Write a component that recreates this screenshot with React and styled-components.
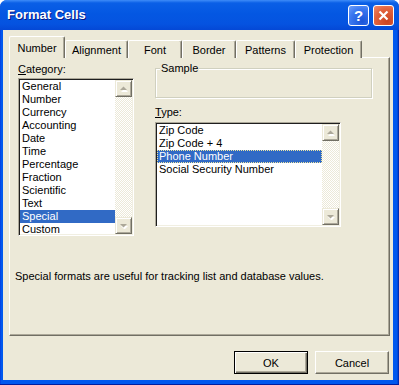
import React from "react";
import styled, { createGlobalStyle } from "styled-components";

const GlobalStyle = createGlobalStyle`
  html, body { margin: 0; padding: 0; background: #fff; }
  body {
    font-family: "Liberation Sans", Arial, sans-serif;
    font-size: 11px;
    color: #000;
  }
`;

const Frame = styled.div`
  width: 399px;
  height: 385px;
  box-sizing: border-box;
  display: flex;
  flex-direction: column;
  padding: 0 6px 5px 3px;
  border-radius: 7px 7px 0 0;
  overflow: hidden;
  background: linear-gradient(90deg, #0831d9 0, #0058ee 1px, #0058ee calc(100% - 2px), #001ea0 100%);
  box-shadow: inset 0 -1px #001ea0;
`;

const TitleBar = styled.div`
  height: 30px;
  margin: 0 -6px 0 -3px;
  padding: 0 5px 0 7px;
  display: flex;
  align-items: center;
  gap: 2px;
  background: linear-gradient(180deg, #3e8cf8 0, #0a5fe6 3px, #0457e2 14px, #0553e0 24px, #0448d6 30px);
`;

const Title = styled.div`
  flex: 1;
  color: #fff;
  font-weight: bold;
  font-size: 13px;
  text-shadow: 1px 1px #0a1883;
  padding-bottom: 1px;
`;

const CapButton = styled.div`
  width: 21px;
  height: 21px;
  box-sizing: border-box;
  border: 1px solid #fff;
  border-radius: 3px;
  display: flex;
  align-items: center;
  justify-content: center;
  color: #fff;
  font-weight: bold;
  font-size: 15px;
  background: ${(p) =>
    p.$close
      ? "radial-gradient(circle at 70% 80%, #cc4420 0, #e2623d 60%, #f08a6c 100%)"
      : "radial-gradient(circle at 70% 80%, #1a55d8 0, #3b78f0 60%, #6fa0fa 100%)"};
  margin-left: ${(p) => (p.$close ? "2px" : "0")};
`;

const Client = styled.div`
  flex: 1;
  display: flex;
  flex-direction: column;
  background: #ece9d8;
  padding: 7px 3px 0 6px;
`;

const TabStrip = styled.div`
  display: flex;
  align-items: flex-end;
  height: 21px;
  margin-bottom: -1px;
  position: relative;
  z-index: 1;
`;

const Tab = styled.div`
  width: ${(p) => p.$w}px;
  height: ${(p) => (p.$active ? 22 : 18)}px;
  box-sizing: border-box;
  display: flex;
  align-items: center;
  justify-content: center;
  padding-top: ${(p) => (p.$active ? 0 : 1)}px;
  background: #ece9d8;
  border-top: 1px solid #fff;
  border-left: 1px solid #fff;
  border-right: 1px solid #716f64;
  box-shadow: inset -1px 0 #aca899;
  border-radius: 2px 2px 0 0;
`;

const Panel = styled.div`
  height: 279px;
  box-sizing: border-box;
  border-top: 1px solid #fff;
  border-left: 1px solid #fff;
  border-right: 1px solid #716f64;
  border-bottom: 1px solid #716f64;
  box-shadow: inset -1px -1px #aca899;
  display: flex;
  flex-direction: column;
`;

const TopRow = styled.div`
  display: flex;
  gap: 21px;
  padding: 5px 0 0 8px;
`;

const Column = styled.div`
  width: ${(p) => p.$w}px;
  display: flex;
  flex-direction: column;
`;

const Label = styled.div`
  height: 13px;
  line-height: 13px;
  margin-top: ${(p) => p.$mt || 0}px;
`;

const ListBox = styled.div`
  margin-top: ${(p) => p.$mt}px;
  height: ${(p) => p.$h}px;
  box-sizing: border-box;
  display: flex;
  border-top: 1px solid #aca899;
  border-left: 1px solid #aca899;
  border-bottom: 1px solid #fff;
  border-right: 1px solid #fff;
  box-shadow: inset 1px 1px #1e1e1e, inset -1px -1px #f1efe2;
  padding: 1px;
  background: #fff;
`;

const Items = styled.div`
  flex: 1;
  overflow: hidden;
`;

const Item = styled.div`
  height: 13px;
  line-height: 13px;
  padding-left: 2px;
  white-space: nowrap;
  background: ${(p) => (p.$selected ? "#316ac5" : "transparent")};
  color: ${(p) => (p.$selected ? "#fff" : "#000")};
  outline: ${(p) => (p.$focus ? "1px dotted #f0e6a0" : "none")};
  outline-offset: -1px;
`;

const ScrollBar = styled.div`
  width: 17px;
  display: flex;
  flex-direction: column;
  justify-content: space-between;
  background: repeating-conic-gradient(#fff 0 25%, #ece9d8 0 50%) 0 0 / 2px 2px;
`;

const ScrollButton = styled.div`
  width: 17px;
  height: 17px;
  box-sizing: border-box;
  display: flex;
  align-items: center;
  justify-content: center;
  background: #ece9d8;
  border-top: 1px solid #ece9d8;
  border-left: 1px solid #ece9d8;
  border-right: 1px solid #716f64;
  border-bottom: 1px solid #716f64;
  box-shadow: inset 1px 1px #fff, inset -1px -1px #aca899;
`;

const GroupBox = styled.div`
  position: relative;
  margin-top: 5px;
  height: 30px;
  box-sizing: border-box;
  border: 1px solid #d0d0bf;
  box-shadow: inset 1px 1px #fff, 1px 1px #fff;
`;

const Legend = styled.span`
  position: absolute;
  top: -7px;
  left: 4px;
  padding: 0 1px;
  line-height: 13px;
  background: #ece9d8;
`;

const Description = styled.div`
  margin-top: 34px;
  padding-left: 5px;
  line-height: 13px;
`;

const ButtonRow = styled.div`
  display: flex;
  justify-content: flex-end;
  gap: 7px;
  margin-top: 15px;
  padding-right: 1px;
`;

const Button = styled.div`
  width: 74px;
  height: 23px;
  box-sizing: border-box;
  display: flex;
  align-items: center;
  justify-content: center;
  background: #ece9d8;
  ${(p) =>
    p.$default
      ? `border: 1px solid #000;
         box-shadow: inset 1px 1px #fff, inset -1px -1px #716f64, inset -2px -2px #aca899;`
      : `border-top: 1px solid #fff;
         border-left: 1px solid #fff;
         border-right: 1px solid #716f64;
         border-bottom: 1px solid #716f64;
         box-shadow: inset -1px -1px #aca899;`}
`;

function Arrow({ down }) {
  return (
    <svg width="9" height="6" viewBox="0 0 9 6">
      <polygon
        points={down ? "1,2 8,2 4.5,5.5" : "1,5 8,5 4.5,1.5"}
        fill="#fff"
        transform="translate(1,1)"
      />
      <polygon points={down ? "1,1 8,1 4.5,4.5" : "1,4 8,4 4.5,0.5"} fill="#aca899" />
    </svg>
  );
}

function List({ items, selected, focus, mt, h }) {
  return (
    <ListBox $mt={mt} $h={h}>
      <Items>
        {items.map((it) => (
          <Item key={it} $selected={it === selected} $focus={it === focus}>
            {it}
          </Item>
        ))}
      </Items>
      <ScrollBar>
        <ScrollButton>
          <Arrow />
        </ScrollButton>
        <ScrollButton>
          <Arrow down />
        </ScrollButton>
      </ScrollBar>
    </ListBox>
  );
}

const tabs = [
  ["Number", 56],
  ["Alignment", 63],
  ["Font", 54],
  ["Border", 54],
  ["Patterns", 59],
  ["Protection", 67],
];

const categories = [
  "General",
  "Number",
  "Currency",
  "Accounting",
  "Date",
  "Time",
  "Percentage",
  "Fraction",
  "Scientific",
  "Text",
  "Special",
  "Custom",
];

const types = ["Zip Code", "Zip Code + 4", "Phone Number", "Social Security Number"];

export default function App() {
  return (
    <>
      <GlobalStyle />
      <Frame>
        <TitleBar>
          <Title>Format Cells</Title>
          <CapButton>?</CapButton>
          <CapButton $close>
            <svg width="11" height="11" viewBox="0 0 11 11">
              <path d="M1.5 1.5 L9.5 9.5 M9.5 1.5 L1.5 9.5" stroke="#fff" strokeWidth="2.2" />
            </svg>
          </CapButton>
        </TitleBar>
        <Client>
          <TabStrip>
            {tabs.map(([t, w], i) => (
              <Tab key={t} $w={w} $active={i === 0}>
                {t}
              </Tab>
            ))}
          </TabStrip>
          <Panel>
            <TopRow>
              <Column $w={116}>
                <Label>
                  <u>C</u>ategory:
                </Label>
                <List items={categories} selected="Special" mt={2} h={158} />
              </Column>
              <Column $w={217}>
                <GroupBox>
                  <Legend>Sample</Legend>
                </GroupBox>
                <Label $mt={8}>
                  <u>T</u>ype:
                </Label>
                <Column $w={186}>
                  <List
                    items={types}
                    selected="Phone Number"
                    focus="Phone Number"
                    mt={3}
                    h={105}
                  />
                </Column>
              </Column>
            </TopRow>
            <Description>
              Special formats are useful for tracking list and database values.
            </Description>
          </Panel>
          <ButtonRow>
            <Button $default>OK</Button>
            <Button>Cancel</Button>
          </ButtonRow>
        </Client>
      </Frame>
    </>
  );
}
